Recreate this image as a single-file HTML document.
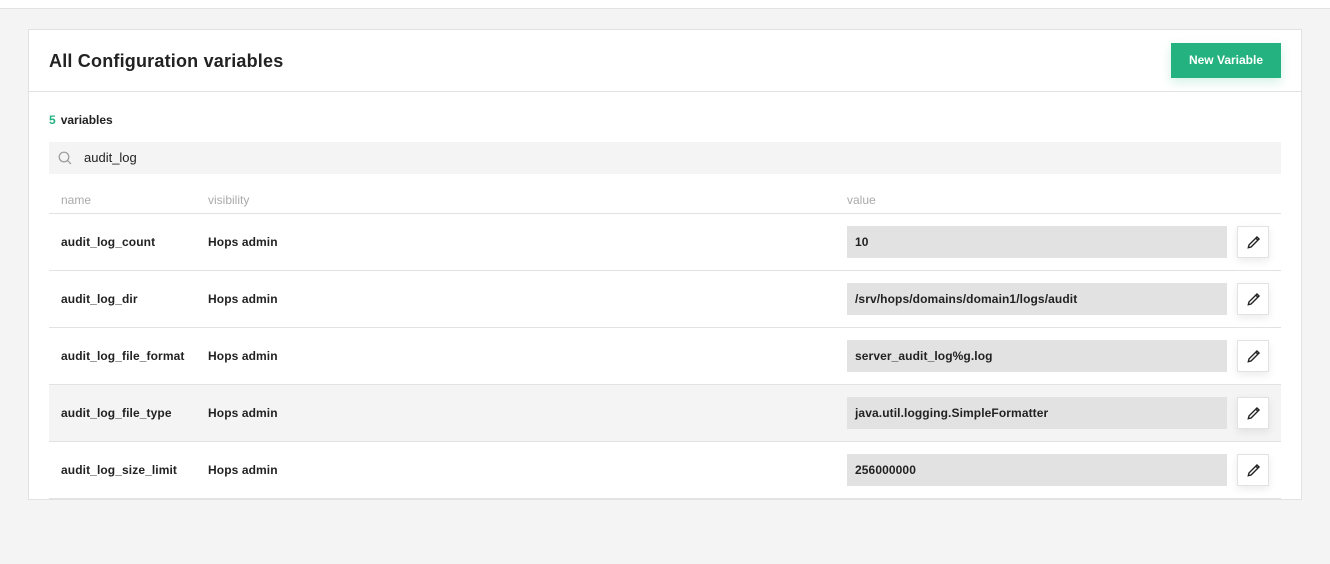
<!DOCTYPE html>
<html><head><style>
*{box-sizing:border-box;margin:0;padding:0}
body{width:1330px;height:564px;background:#f4f4f4;font-family:"Liberation Sans",sans-serif;color:#222;position:relative;overflow:hidden}
.top{position:absolute;left:0;top:0;width:1330px;height:9px;background:#fff;border-bottom:1px solid #e2e2e2}
.card{position:absolute;left:28px;top:29px;width:1274px;height:471px;background:#fff;border:1px solid #e2e2e2}
.hdr{height:62px;border-bottom:1px solid #e2e2e2;position:relative}
.hdr h1{position:absolute;left:20px;top:21px;font-size:18px;font-weight:bold;color:#222;letter-spacing:0.2px}
.btn{position:absolute;left:1142px;top:13px;width:110px;height:35px;background:#24b281;color:#fff;font-size:12px;font-weight:bold;text-align:center;line-height:35px;box-shadow:0 4px 10px rgba(36,178,129,.2)}
.cnt{position:absolute;left:20px;top:83px;font-size:12px;font-weight:bold}
.cnt span{color:#24b281;margin-right:5px}
.search{position:absolute;left:20px;top:112px;width:1232px;height:32px;background:#f4f4f4;font-size:13px;line-height:32px;padding-left:35px}
.search svg{position:absolute;left:9px;top:9px}
.th{position:absolute;top:163px;font-size:12px;color:#aaa}
.thl{position:absolute;left:20px;top:183px;width:1232px;border-top:1px solid #e2e2e2}
.row{position:absolute;left:20px;width:1232px;height:57px;border-bottom:1px solid #e2e2e2;font-size:12px;font-weight:bold;letter-spacing:0.1px}
.row .n{position:absolute;left:12px;top:21px}
.row .v{position:absolute;left:159px;top:21px}
.row .val{position:absolute;left:798px;top:12px;width:380px;height:32px;background:#e2e2e2;line-height:32px;padding-left:8px}
.row .ed{position:absolute;left:1188px;top:12px;width:32px;height:32px;border:1px solid #e2e2e2;background:#fff;box-shadow:0 3px 8px rgba(0,0,0,.08)}
.row .ed svg{position:absolute;left:8px;top:8px}
</style></head><body>
<div class="top"></div>
<div class="card">
<div class="hdr"><h1>All Configuration variables</h1><div class="btn">New Variable</div></div>
<div class="cnt"><span>5</span>variables</div>
<div class="search"><svg width="14" height="14" viewBox="0 0 14 14"><circle cx="6" cy="6" r="4.8" fill="none" stroke="#999" stroke-width="1.2"/><line x1="9.5" y1="9.5" x2="13" y2="13" stroke="#999" stroke-width="1.2"/></svg>audit_log</div>
<div class="th" style="left:32px">name</div>
<div class="th" style="left:179px">visibility</div>
<div class="th" style="left:818px">value</div>
<div class="thl"></div>
<div class="row" style="top:184px"><div class="n">audit_log_count</div><div class="v">Hops admin</div><div class="val">10</div><div class="ed"><svg width="15" height="15" viewBox="0 0 13 13"><path d="M2 11 L2.6 8.6 L9.5 1.7 L11.3 3.5 L4.4 10.4 Z M8.5 2.7 L10.3 4.5" fill="none" stroke="#222" stroke-width="1.2"/></svg></div></div>
<div class="row" style="top:241px"><div class="n">audit_log_dir</div><div class="v">Hops admin</div><div class="val">/srv/hops/domains/domain1/logs/audit</div><div class="ed"><svg width="15" height="15" viewBox="0 0 13 13"><path d="M2 11 L2.6 8.6 L9.5 1.7 L11.3 3.5 L4.4 10.4 Z M8.5 2.7 L10.3 4.5" fill="none" stroke="#222" stroke-width="1.2"/></svg></div></div>
<div class="row" style="top:298px"><div class="n">audit_log_file_format</div><div class="v">Hops admin</div><div class="val">server_audit_log%g.log</div><div class="ed"><svg width="15" height="15" viewBox="0 0 13 13"><path d="M2 11 L2.6 8.6 L9.5 1.7 L11.3 3.5 L4.4 10.4 Z M8.5 2.7 L10.3 4.5" fill="none" stroke="#222" stroke-width="1.2"/></svg></div></div>
<div class="row" style="top:355px;background:#f4f4f4"><div class="n">audit_log_file_type</div><div class="v">Hops admin</div><div class="val">java.util.logging.SimpleFormatter</div><div class="ed"><svg width="15" height="15" viewBox="0 0 13 13"><path d="M2 11 L2.6 8.6 L9.5 1.7 L11.3 3.5 L4.4 10.4 Z M8.5 2.7 L10.3 4.5" fill="none" stroke="#222" stroke-width="1.2"/></svg></div></div>
<div class="row" style="top:412px"><div class="n">audit_log_size_limit</div><div class="v">Hops admin</div><div class="val">256000000</div><div class="ed"><svg width="15" height="15" viewBox="0 0 13 13"><path d="M2 11 L2.6 8.6 L9.5 1.7 L11.3 3.5 L4.4 10.4 Z M8.5 2.7 L10.3 4.5" fill="none" stroke="#222" stroke-width="1.2"/></svg></div></div>
</div>
</body></html>
